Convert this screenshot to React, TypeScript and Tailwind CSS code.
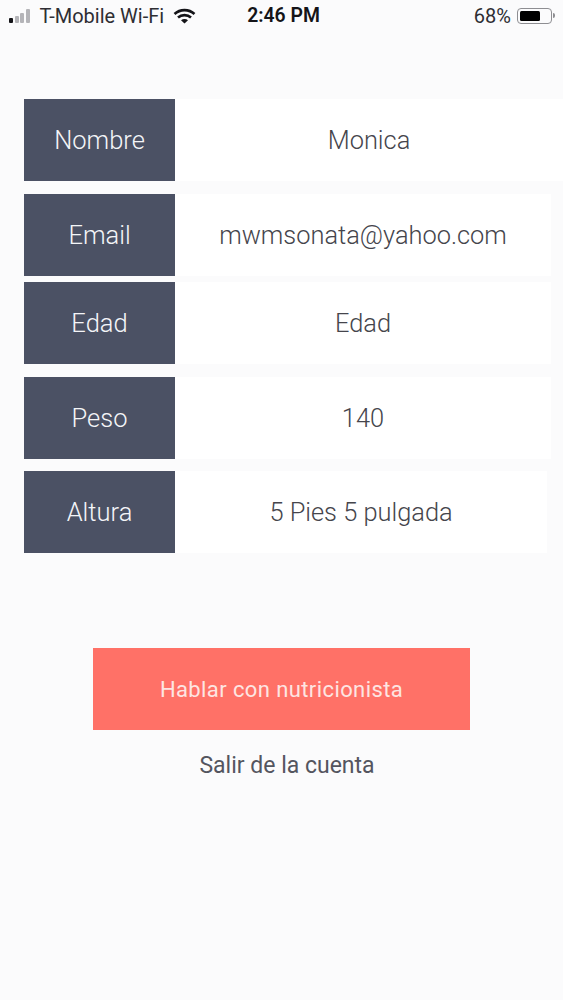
import React from 'react';

const rows = [
  { label: 'Nombre', value: 'Monica', width: 'w-[388px]', gap: 'mb-[13px]' },
  { label: 'Email', value: 'mwmsonata@yahoo.com', width: 'w-[376px]', gap: 'mb-[6px]' },
  { label: 'Edad', value: 'Edad', width: 'w-[376px]', gap: 'mb-[13px]' },
  { label: 'Peso', value: '140', width: 'w-[376px]', gap: 'mb-[12px]' },
  { label: 'Altura', value: '5 Pies 5 pulgada', width: 'w-[372px]', gap: '' },
];

function WifiIcon() {
  return (
    <svg width="23" height="16" viewBox="0 0 23 16" fill="none" stroke="#141418" strokeWidth="2.6">
      <path d="M1.5 6 C7 0.8 16 0.8 21.5 6" />
      <path d="M5 9.5 C8.6 6.3 14.4 6.3 18 9.5" />
      <path d="M11.5 15.5 L8 12.2 C10 10.6 13 10.6 15 12.2 Z" fill="#141418" stroke="none" />
    </svg>
  );
}

function StatusBar() {
  return (
    <div className="flex h-[31px] items-center justify-between pl-[9px] pr-[8px] text-[20px] leading-none text-[#2e2e33]">
      <div className="flex w-[200px] items-center">
        <div className="flex items-end gap-[1.5px]">
          <span className="h-[5px] w-[4px] rounded-[1px] bg-[#141418]" />
          <span className="h-[7px] w-[4px] rounded-[1px] bg-[#b4b4b8]" />
          <span className="h-[10px] w-[4px] rounded-[1px] bg-[#b4b4b8]" />
          <span className="h-[14px] w-[4px] rounded-[1px] bg-[#b4b4b8]" />
        </div>
        <span className="ml-[10px] whitespace-nowrap text-[20px]">T-Mobile Wi-Fi</span>
        <span className="ml-[9px] flex"><WifiIcon /></span>
      </div>
      <span className="ml-[3px] text-[19.4px] font-semibold text-[#141418]">2:46 PM</span>
      <div className="flex w-[200px] items-center justify-end">
        <span>68%</span>
        <div className="ml-[6px] flex h-[16px] w-[35px] items-center rounded-[4px] border border-[#8e8e92] p-[2px]">
          <div className="h-full w-[68%] rounded-[1.5px] bg-black" />
        </div>
        <span className="ml-[1px] h-[5px] w-[2px] rounded-r-full bg-[#8e8e92]" />
      </div>
    </div>
  );
}

export default function App() {
  return (
    <div className="h-[1000px] w-[563px] overflow-hidden bg-[#fbfbfc] font-['Roboto',sans-serif]">
      <StatusBar />

      <div className="mt-[68px] pl-[24px]">
        {rows.map((row) => (
          <div key={row.label} className={`flex h-[82px] ${row.gap}`}>
            <div className="flex w-[151px] items-center justify-center bg-[#4b5164] pt-[1px] text-[25.5px] font-[350] text-[#f4f5f8]">
              {row.label}
            </div>
            <div className={`flex items-center justify-center bg-white pt-[1px] text-[25.4px] font-[350] text-[#45454c] ${row.width}`}>
              {row.value}
            </div>
          </div>
        ))}
      </div>

      <div className="mt-[95px] flex flex-col items-center">
        <button className="h-[82px] w-[377px] bg-[#ff7167] text-[22px] tracking-[0.4px] text-[#fde5e2]">
          Hablar con nutricionista
        </button>
        <button className="ml-[11px] mt-[22px] pt-[1px] text-[23px] leading-[26px] text-[#54555f]">
          Salir de la cuenta
        </button>
      </div>
    </div>
  );
}
